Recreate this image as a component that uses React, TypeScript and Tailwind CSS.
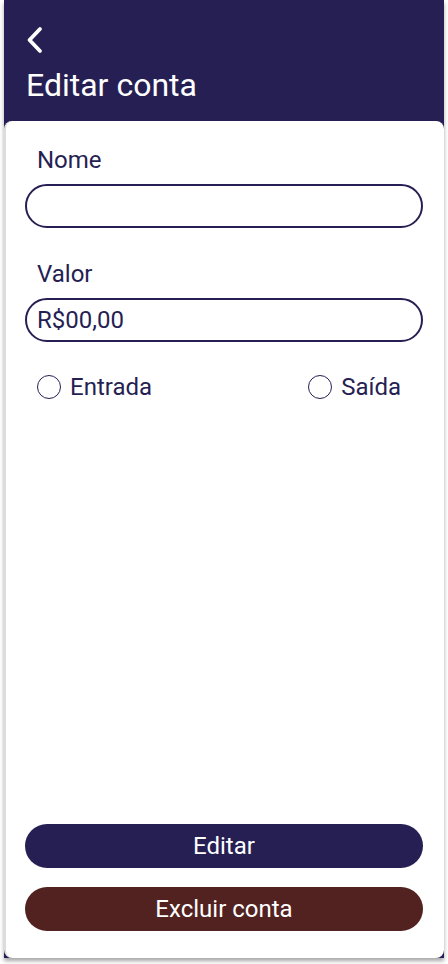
export default function App() {
  return (
    <div className="h-[964px] w-[448px] bg-white font-['Roboto',sans-serif]">
      <div className="ml-[4px] flex h-[958px] w-[440px] flex-col bg-[#261f53] shadow-[0_3px_4px_rgba(0,0,0,0.35)]">
        <header className="flex h-[121px] flex-col px-[21px] pt-[26px] text-white">
          <svg width="19" height="28" viewBox="0 0 19 28" fill="none">
            <path d="M15 3L4.5 14L15 25" stroke="white" strokeWidth="3.8" strokeLinecap="round" strokeLinejoin="round" />
          </svg>
          <h1 className="ml-[1px] mt-[12px] text-[32px] leading-[38px]">Editar conta</h1>
        </header>
        <main className="flex flex-1 flex-col rounded-lg border-l-[2px] border-[#dcdcdc] bg-white pb-[27px] pl-[19px] pr-[21px] pt-[25px] text-[#261f53]">
          <label className="ml-[12px] text-[24px] leading-[28px]">Nome</label>
          <input className="mt-[10px] h-[44px] w-full rounded-[22px] border-2 border-[#261f53] px-[10px] text-[24px] outline-none" />
          <label className="ml-[12px] mt-[32px] text-[24px] leading-[28px]">Valor</label>
          <input
            defaultValue="R$00,00"
            className="mt-[10px] h-[44px] w-full rounded-[22px] border-2 border-[#261f53] px-[10px] text-[24px] text-[#261f53] outline-none"
          />
          <div className="mt-[31px] flex items-center justify-between pl-[12px] pr-[22px]">
            <label className="flex items-center gap-[9px] text-[24px] leading-[28px]">
              <span className="h-[24px] w-[24px] rounded-full border-[1.5px] border-[#261f53]" />
              Entrada
            </label>
            <label className="flex items-center gap-[9px] text-[24px] leading-[28px]">
              <span className="h-[24px] w-[24px] rounded-full border-[1.5px] border-[#261f53]" />
              Saída
            </label>
          </div>
          <div className="mt-auto flex flex-col gap-[19px]">
            <button className="h-[44px] w-full rounded-full bg-[#261f53] text-[24px] text-white">Editar</button>
            <button className="h-[44px] w-full rounded-full bg-[#522220] text-[24px] text-white">Excluir conta</button>
          </div>
        </main>
      </div>
    </div>
  )
}
